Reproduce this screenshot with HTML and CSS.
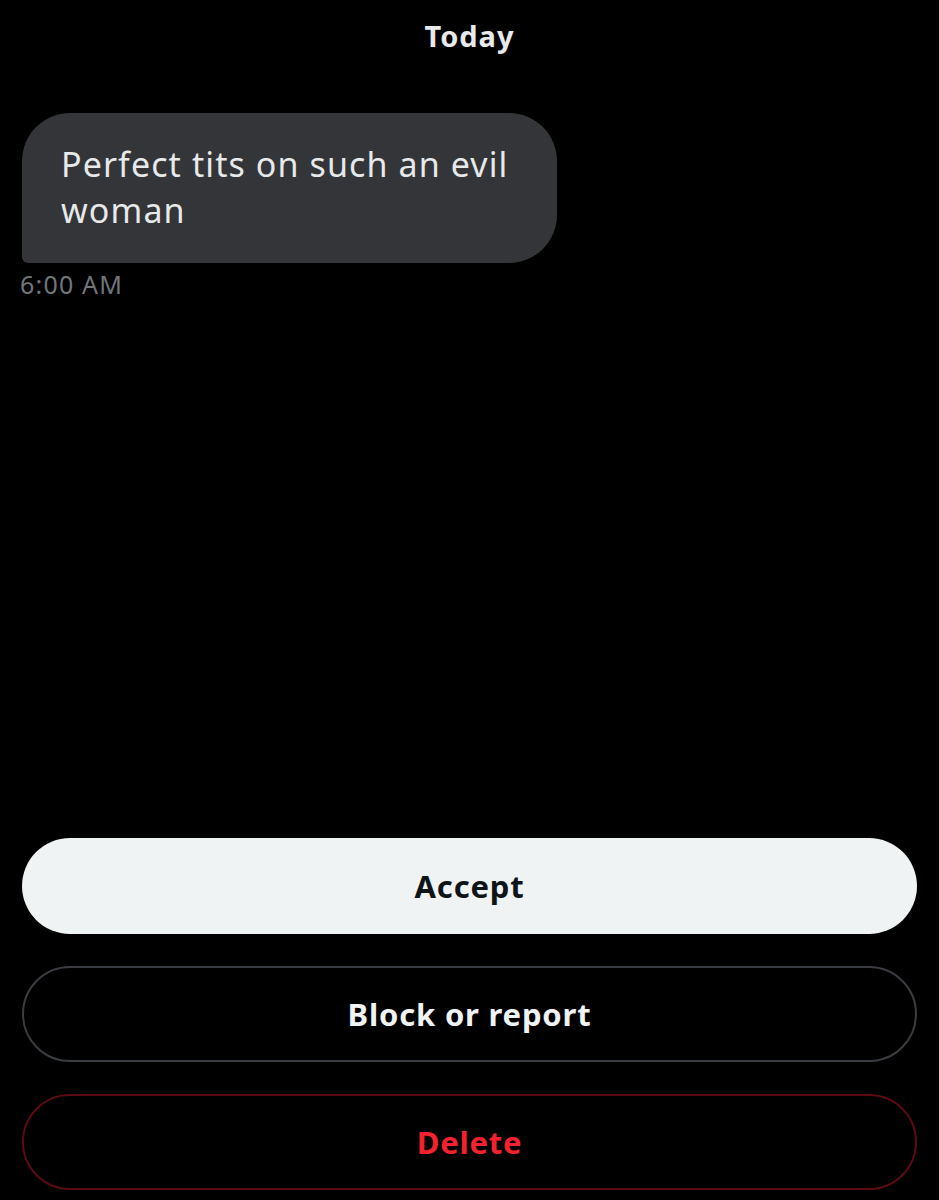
FILE: index.html
```html
<!DOCTYPE html>
<html lang="en">
<head>
<meta charset="utf-8">
<title>Message request</title>
<link rel="stylesheet" href="styles.css">
</head>
<body>
<div class="page">
  <div class="date">Today</div>
  <div class="thread">
    <div class="bubble">Perfect tits on such an evil woman</div>
    <div class="time">6:00 AM</div>
  </div>
  <div class="actions">
    <button class="btn btn-accept">Accept</button>
    <button class="btn btn-block">Block or report</button>
    <button class="btn btn-delete">Delete</button>
  </div>
</div>
</body>
</html>
```
FILE: styles.css
```css
html, body {
  margin: 0;
  padding: 0;
  background: #000;
}
body {
  font-family: "Noto Sans", "Open Sans", "Liberation Sans", sans-serif;
  color: #e7e9ea;
}
.page {
  height: 1200px;
  display: flex;
  flex-direction: column;
  box-sizing: border-box;
}
.date {
  text-align: center;
  font-weight: 700;
  font-size: 29px;
  line-height: 34px;
  letter-spacing: 1px;
  padding-top: 19px;
  color: #e7e9ea;
}
.thread {
  padding: 60px 22px 0 20px;
  display: flex;
  flex-direction: column;
  align-items: flex-start;
}
.bubble {
  width: 535px;
  box-sizing: border-box;
  margin-left: 2px;
  background: #333538;
  border-radius: 48px 48px 48px 6px;
  padding: 28px 30px 30px 39px;
  font-size: 34px;
  line-height: 46px;
  letter-spacing: 1.1px;
  color: #e7e9ea;
}
.time {
  margin-top: 6px;
  font-size: 25px;
  line-height: 30px;
  letter-spacing: 1.2px;
  color: #71767b;
}
.actions {
  margin-top: auto;
  padding: 0 22px 10px;
  display: flex;
  flex-direction: column;
  gap: 32px;
}
.btn {
  height: 96px;
  border-radius: 48px;
  font-family: inherit;
  font-weight: 700;
  font-size: 31px;
  letter-spacing: 0.8px;
  display: flex;
  align-items: center;
  justify-content: center;
  box-sizing: border-box;
  cursor: pointer;
}
.btn-accept {
  background: #eff3f4;
  color: #0f1419;
  border: none;
}
.btn-block {
  background: #000;
  color: #eff3f4;
  border: 2px solid #3a3d41;
}
.btn-delete {
  background: #000;
  color: #f4212e;
  border: 2px solid #5c0b12;
}
```
